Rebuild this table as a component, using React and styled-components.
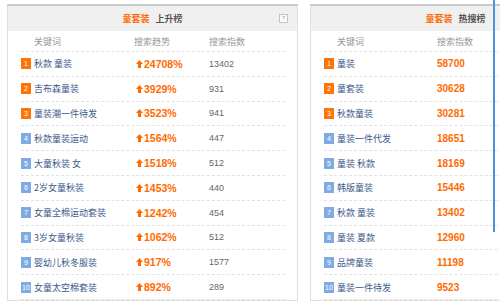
import React from 'react'
import styled, { createGlobalStyle } from 'styled-components'

const risingList = [
  { word: '秋款 童装', trend: '24708%', index: '13402' },
  { word: '吉布森童装', trend: '3929%', index: '931' },
  { word: '童装潮一件待发', trend: '3523%', index: '941' },
  { word: '秋款童装运动', trend: '1564%', index: '447' },
  { word: '大童秋装 女', trend: '1518%', index: '512' },
  { word: '2岁女童秋装', trend: '1453%', index: '440' },
  { word: '女童全棉运动套装', trend: '1242%', index: '454' },
  { word: '3岁女童秋装', trend: '1062%', index: '512' },
  { word: '婴幼儿秋冬服装', trend: '917%', index: '1577' },
  { word: '女童太空棉套装', trend: '892%', index: '289' },
]

const hotList = [
  { word: '童装', index: '58700' },
  { word: '童套装', index: '30628' },
  { word: '秋款童装', index: '30281' },
  { word: '童装一件代发', index: '18651' },
  { word: '童装 秋款', index: '18169' },
  { word: '韩版童装', index: '15446' },
  { word: '秋款 童装', index: '13402' },
  { word: '童装 夏款', index: '12960' },
  { word: '品牌童装', index: '11198' },
  { word: '童装一件待发', index: '9523' },
]

const GlobalStyle = createGlobalStyle`
  html, body {
    margin: 0;
    padding: 0;
    background: #fff;
    overflow: hidden;
  }
  body {
    font-family: "Liberation Sans", "Noto Sans CJK SC", sans-serif;
  }
`

const Page = styled.div`
  position: relative;
  width: 500px;
  height: 301px;
  overflow: hidden;
  display: flex;
  gap: 12px;
  padding: 4px 0 0 7px;
  box-sizing: border-box;
`

const Panel = styled.section`
  flex: none;
  width: 291px;
  box-sizing: border-box;
  border: 1px solid #e0e0e0;
  border-top: 2px solid #cacaca;
  background: #fff;
`

const Header = styled.div`
  position: relative;
  height: 25px;
  background: #f0f0f0;
  display: flex;
  align-items: center;
  justify-content: center;
  gap: 6px;
  font-size: 9px;
  font-family: "Noto Sans CJK SC", sans-serif;
  font-weight: bold;
`

const Category = styled.span`
  color: #ff6a00;
`

const BoardName = styled.span`
  color: #555;
`

const HelpBox = styled.span`
  position: absolute;
  right: 9px;
  top: 8px;
  width: 9px;
  height: 9px;
  box-sizing: border-box;
  border: 1px solid #c4c4c4;
  background: #fafafa;
  color: #aaa;
  font-size: 6px;
  line-height: 7px;
  text-align: center;
  font-weight: normal;
  font-family: "Liberation Sans", sans-serif;
`

const Body = styled.div`
  padding: 0 12px 0 13px;
`

const Row = styled.div`
  display: grid;
  grid-template-columns: ${p => p.$cols};
  align-items: center;
  height: ${p => (p.$head ? '21px' : '24.8px')};
  box-sizing: border-box;
  border-bottom: 1px dashed #e2e2e2;
  font-size: 9px;
`

const HeadCell = styled.span`
  color: #999;
  font-family: "Noto Sans CJK SC", sans-serif;
  padding-left: ${p => p.$pad || 0}px;
`

const Keyword = styled.span`
  display: flex;
  align-items: center;
  gap: 3px;
  color: #3d5a8c;
  font-family: "Noto Sans CJK SC", sans-serif;
  white-space: nowrap;
`

const Rank = styled.span`
  flex: none;
  min-width: 10px;
  height: 11px;
  padding: 0 1px;
  box-sizing: border-box;
  background: ${p => (p.$top ? '#ff7406' : '#7fabe4')};
  color: #fff;
  font-size: 7px;
  line-height: 11px;
  text-align: center;
  font-family: "Liberation Sans", sans-serif;
`

const Trend = styled.span`
  display: flex;
  align-items: center;
  gap: 1px;
  padding-left: 2px;
  color: #ff6a00;
  font-weight: bold;
  font-size: 10.5px;
`

const Index = styled.span`
  color: ${p => (p.$hot ? '#ff6a00' : '#666')};
  font-weight: ${p => (p.$hot ? 'bold' : 'normal')};
  font-size: ${p => (p.$hot ? '10px' : '9px')};
`

const ScrollMark = styled.div`
  position: absolute;
  left: 493px;
  top: 0;
  width: 2px;
  height: 232px;
  background: #4f94da;
`

const UpArrow = () => (
  <svg width="7" height="8" viewBox="0 0 7 8">
    <polygon points="3.5,0 7,4 5,4 5,8 2,8 2,4 0,4" fill="#ff6a00" />
  </svg>
)

const RisingBoard = () => {
  const cols = '113px 75px 1fr'
  return (
    <Panel>
      <Header>
        <Category>童套装</Category>
        <BoardName>上升榜</BoardName>
        <HelpBox>?</HelpBox>
      </Header>
      <Body>
        <Row $head $cols={cols}>
          <HeadCell $pad={13}>关键词</HeadCell>
          <HeadCell>搜索趋势</HeadCell>
          <HeadCell>搜索指数</HeadCell>
        </Row>
        {risingList.map((item, i) => (
          <Row key={i} $cols={cols}>
            <Keyword>
              <Rank $top={i < 3}>{i + 1}</Rank>
              {item.word}
            </Keyword>
            <Trend>
              <UpArrow />
              {item.trend}
            </Trend>
            <Index>{item.index}</Index>
          </Row>
        ))}
      </Body>
    </Panel>
  )
}

const HotBoard = () => {
  const cols = '113px 1fr'
  return (
    <Panel>
      <Header>
        <Category>童套装</Category>
        <BoardName>热搜榜</BoardName>
      </Header>
      <Body>
        <Row $head $cols={cols}>
          <HeadCell $pad={13}>关键词</HeadCell>
          <HeadCell>搜索指数</HeadCell>
        </Row>
        {hotList.map((item, i) => (
          <Row key={i} $cols={cols}>
            <Keyword>
              <Rank $top={i < 3}>{i + 1}</Rank>
              {item.word}
            </Keyword>
            <Index $hot>{item.index}</Index>
          </Row>
        ))}
      </Body>
    </Panel>
  )
}

const App = () => {
  return (
    <>
      <GlobalStyle />
      <Page>
        <RisingBoard />
        <HotBoard />
        <ScrollMark />
      </Page>
    </>
  )
}

export default App
